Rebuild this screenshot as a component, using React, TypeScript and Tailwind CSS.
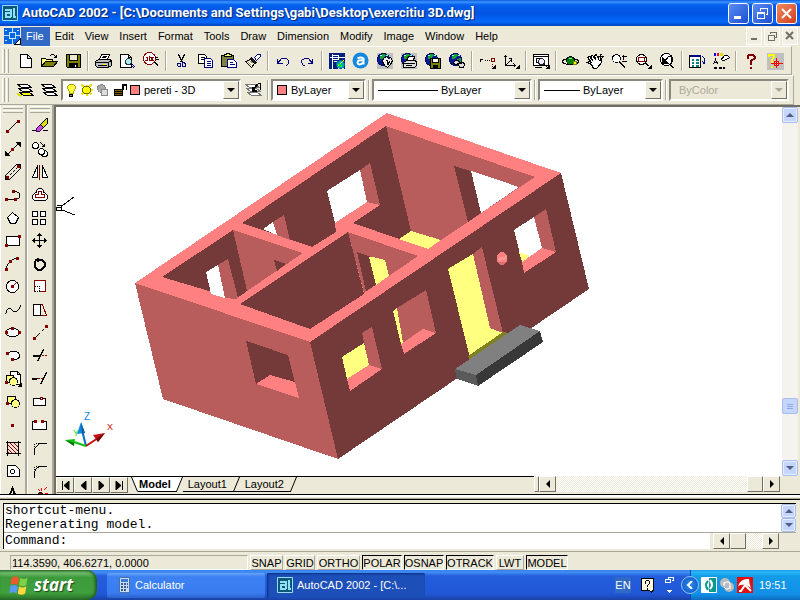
import React from "react"

type IconProps = { children: React.ReactNode; size?: number }

function Icon({ children, size = 18 }: IconProps): React.ReactElement {
  return (
    <svg
      width={size}
      height={size}
      viewBox={`0 0 ${size} ${size}`}
      fill="none"
      stroke="#000"
      shapeRendering="crispEdges"
      className="shrink-0"
      aria-hidden="true"
    >
      <g transform="translate(.5 .5)">{children}</g>
    </svg>
  )
}

const globe = (
  <>
    <circle cx="7" cy="7" r="6" fill="#0a1a9a" stroke="#001060" />
    <path d="M3 3l4-2 2 2-2 3-3 1zM8 7l4-2 1 3-3 3z" fill="#18a030" stroke="none" />
    <path d="M3 3h2M9 3h2" stroke="#8ff" />
  </>
)

type Tool = { name: string; icon: React.ReactNode }

const standardTools: Tool[][] = [
  [
    { name: "New", icon: <path d="M4 2h7l4 4v9H4zM11 2v4h4" fill="#fff" /> },
    {
      name: "Open",
      icon: (
        <>
          <path d="M1 14V6h4l1 1h6v3" fill="#ffff80" />
          <path d="M1 14l4-5h12l-4 5z" fill="#808000" />
          <path d="M9 4l2-2h2l3 3M16 2v3h-3" />
        </>
      ),
    },
    {
      name: "Save",
      icon: (
        <>
          <path d="M2 2h14v13H3l-1-1z" fill="#808000" />
          <path d="M5 2h8v6H5z" fill="#ece9d8" />
          <path d="M5 11h8v4H5z" fill="#000" />
          <path d="M11 12v2" stroke="#fff" />
        </>
      ),
    },
  ],
  [
    {
      name: "Print",
      icon: (
        <>
          <path d="M5 7l2-5h8l-2 5z" fill="#fff" />
          <path d="M1 9l3-2h12l1 2v4l-3 2H3l-2-2z" fill="#bbb" />
          <path d="M1 10h13l3-2M14 10v5M3 13h9M8 4h4M7 5h4" />
          <path d="M8 12h3" stroke="#ff0" />
        </>
      ),
    },
    {
      name: "Print Preview",
      icon: (
        <>
          <path d="M2 2h8l3 3v10H2zM10 2v3h3" fill="#fff" />
          <circle cx="10" cy="9" r="3" fill="#aee" stroke="#333" />
          <path d="M12 12l4 4M13 11l4 4" stroke="#000080" />
        </>
      ),
    },
    {
      name: "Find and Replace",
      icon: (
        <>
          <circle cx="7" cy="6" r="6" fill="#fff" stroke="#800000" />
          <path d="M3 5h2v3H3V7M7 3v5h2V5H7M11 5h-1v3h1" stroke="#800000" />
          <path d="M12 10l4 4M13 10l3 3M12 5h3M13 7h3" />
        </>
      ),
    },
  ],
  [
    {
      name: "Cut",
      icon: (
        <>
          <path d="M6 2l4 8M12 2L8 10" />
          <path d="M5 11h3v3H6l-1-1zM10 10h2l1 2v2h-3z" stroke="#000080" />
        </>
      ),
    },
    {
      name: "Copy",
      icon: (
        <>
          <path d="M2 2h6l2 2v7H2zM4 5h4M4 7h4" fill="#fff" />
          <path d="M8 6h6l2 2v7H8zM10 9h4M10 11h4M10 13h4" fill="#fff" stroke="#000080" />
        </>
      ),
    },
    {
      name: "Paste",
      icon: (
        <>
          <path d="M1 3h12v11H1z" fill="#808040" />
          <path d="M4 4V2h2V1h3v1h2v2z" fill="#ffff60" />
          <path d="M7 7h6l3 3v5H7zM9 10h3M9 12h5" fill="#fff" stroke="#000080" />
        </>
      ),
    },
    {
      name: "Match Properties",
      icon: (
        <>
          <path d="M10 5l3-3h3v2l-4 4z" fill="#fff" stroke="#000080" />
          <path d="M7 5l5 5-2 1-4-4z" fill="#222" />
          <path d="M6 7l4 4-3 4-6-6z" fill="#ffc" />
          <path d="M3 9l4 4M5 8l4 3" stroke="#888" />
        </>
      ),
    },
  ],
  [
    { name: "Undo", icon: <path d="M3 6v5h5M3 11l4-5h5l2 2v3l-2 2h-1" stroke="#000080" /> },
    { name: "Redo", icon: <path d="M14 6v5H9M14 11l-4-5H6L3 8v2l2 3h1" stroke="#000080" /> },
  ],
  [
    {
      name: "Today",
      icon: (
        <>
          <path d="M1 1h15v15H1z" fill="#002080" stroke="#002080" />
          <path d="M1 5h15M4 1v15M4 3h6v4H4" stroke="#fff" />
          <path d="M1 8h3M5 8h10v8H9V9H5z" fill="#ece9d8" stroke="none" />
          <circle cx="12" cy="12" r="4" fill="#0aa" stroke="#0060a0" />
          <path d="M9 14l6-6" stroke="#ff0" />
          <path d="M10 12l4 2" stroke="#0f0" />
        </>
      ),
    },
    {
      name: "Autodesk Point A",
      icon: (
        <g shapeRendering="auto">
          <circle cx="8" cy="8" r="8" fill="#1587dc" stroke="none" />
          <path d="M5 6q3-2 6 0v6M11 8q-6-1-6 2 1 4 6 0" stroke="#fff" strokeWidth="2" />
        </g>
      ),
    },
    {
      name: "Meet Now",
      icon: (
        <>
          <path d="M0 0h16v16H0z" fill="#c0c0c0" stroke="none" />
          {globe}
          <path d="M7 6l3-2 2 2 2-1 2 3-2 4-3 3-3-2-2-4z" fill="#eee" />
          <path d="M9 8h2v3M13 9l-2 4" />
        </>
      ),
    },
    {
      name: "Publish to Web",
      icon: (
        <>
          <path d="M0 0h16v16H0z" fill="#c0c0c0" stroke="none" />
          {globe}
          <path d="M6 8l2-4h6l-1 4z" fill="#fff" />
          <path d="M3 10l3-2h9l1 2v3l-2 2H3z" fill="#ddd" />
          <path d="M3 11h11M5 13h6" />
        </>
      ),
    },
    {
      name: "eTransmit",
      icon: (
        <>
          {globe}
          <path d="M6 6h10v10H6z" fill="#808000" />
          <path d="M8 6h6v4H8z" fill="#fff" />
          <path d="M9 13h4v3H9z" fill="#000" />
        </>
      ),
    },
    {
      name: "Insert Hyperlink",
      icon: (
        <>
          {globe}
          <path d="M5 10l2-2h3l1 2-1 2H6zM10 12l2-2h3l1 2-1 3h-4z" fill="#ddd" />
          <path d="M8 11h5" />
        </>
      ),
    },
  ],
  [
    {
      name: "Temporary Tracking Point",
      icon: (
        <>
          <path d="M1 7h3M2 6v3M6 8h1M8 8h1M10 8h1" />
          <path d="M13 6h3v3h-3zM14 11v1M14 13v1" stroke="#800000" />
          <path d="M17 13v3h-3z" fill="#000" />
        </>
      ),
    },
    {
      name: "UCS",
      icon: (
        <>
          <path d="M3 3v10h10M1 5l2-2 2 2M11 11l2 2-2 2M3 13l6-6M9 9V6H6" />
          <path d="M17 13v3h-3z" fill="#000" />
        </>
      ),
    },
  ],
  [
    {
      name: "Named Views",
      icon: (
        <>
          <path d="M1 2h15v11H1zM1 4h15" fill="#fff" />
          <path d="M4 6h5v4H4z" />
          <circle cx="9" cy="9" r="3" fill="#eef" stroke="#222" />
          <path d="M11 11l4 4M2 15h7" />
          <path d="M17 13v3h-3z" fill="#000" />
        </>
      ),
    },
  ],
  [
    {
      name: "3D Orbit",
      icon: (
        <>
          <ellipse cx="8" cy="9" rx="8" ry="3" />
          <circle cx="8" cy="8" r="4" fill="#008000" />
          <path d="M6 6h3" stroke="#8f8" />
          <path d="M11 9h3v3h-3z" fill="#ff0" stroke="#808000" />
        </>
      ),
    },
    {
      name: "Pan Realtime",
      icon: (
        <>
          <path d="M1 5l2-1 3 4-2-4 2-1 3 4-1-4 2-1 2 5 1 1 2-1v3l-4 5-1 1H7l-2-4-4-2 2-1 2 1z" fill="#fff" />
          <path d="M14 1v6M11 4h6M13 2h2M13 6h2M12 3v2M16 3v2" />
        </>
      ),
    },
    {
      name: "Zoom Realtime",
      icon: (
        <>
          <circle cx="6" cy="6" r="4" fill="#fff" />
          <path d="M9 9l6 6M9 10l6 6M11 4h5M13 2v5M11 9h5" />
        </>
      ),
    },
    {
      name: "Zoom Window",
      icon: (
        <>
          <circle cx="7" cy="7" r="5" fill="#fff" />
          <path d="M11 11l3 3M12 11l3 3" />
          <path d="M4 5h6v4H4z" stroke="#800000" />
          <path d="M17 13v3h-3z" fill="#000" />
        </>
      ),
    },
    {
      name: "Zoom Previous",
      icon: (
        <>
          <circle cx="8" cy="7" r="6" fill="#fff" />
          <path d="M12 12l4 4M11 12l4 4M6 9l4-5h3v7" />
          <path d="M4 5v6h6z" fill="#000" />
        </>
      ),
    },
  ],
  [
    {
      name: "Properties",
      icon: (
        <>
          <path d="M1 3h11v12H1z" fill="#fff" />
          <path d="M1 3h11" stroke="#000080" strokeWidth="2" />
          <path d="M3 7h2M7 7h3M3 10h2M7 10h3M3 13h2M7 13h3" stroke="#008080" strokeWidth="2" />
          <path d="M14 4l2 2v5M14 9l2 3" stroke="#000080" />
        </>
      ),
    },
    {
      name: "Layer Properties",
      icon: (
        <>
          <path d="M1 2h2" stroke="#00f" strokeWidth="3" />
          <path d="M4 2h2" stroke="#f00" strokeWidth="3" />
          <path d="M7 2h3" stroke="#dd0" strokeWidth="3" />
          <path d="M1 12l2-5 2 5M2 10h3" />
          <path d="M1 15h3M6 15h3M10 15h2" strokeWidth="2" />
          <path d="M8 8l4-5h3l2 2-5 3h-3" fill="#fff" />
        </>
      ),
    },
  ],
  [
    {
      name: "Help",
      icon: <path d="M5 6V4l2-2h3l2 2v2L8 9v3M8 14v2" stroke="#800000" strokeWidth="2" />,
    },
    {
      name: "Active Assistance",
      icon: (
        <>
          <path d="M0 0h17v17H0z" fill="#c0c0c0" stroke="none" />
          <path d="M2 4V2h5v3L5 8v3M5 13v2" stroke="#ff0" strokeWidth="2" />
          <path d="M8 9h4v4H8zM4 11h12M10 5v10" stroke="#f00" />
        </>
      ),
    },
  ],
]

const dot = (x: number, y: number) => <rect x={x - 1} y={y - 1} width="2" height="2" fill="#800000" stroke="#800000" />

const drawTools: Tool[] = [
  { name: "Line", icon: <><path d="M3 14L13 4" />{dot(3, 14)}{dot(14, 4)}</> },
  {
    name: "Construction Line",
    icon: (
      <>
        <path d="M2 15L15 2" />
        <path d="M1 15v-4l4 4zM16 2v4l-4-4z" fill="#000" />
        {dot(8, 9)}
      </>
    ),
  },
  {
    name: "Multiline",
    icon: (
      <>
        <path d="M1 12L12 1h4v4L5 16H1z" />
        <path d="M3 14L14 3" strokeDasharray="2 2" />
        {dot(3, 14)}
        {dot(14, 3)}
      </>
    ),
  },
  { name: "Polyline", icon: <><path d="M2 13h10l3-2V7l-3-2H9" />{dot(2, 13)}{dot(11, 13)}{dot(9, 5)}</> },
  { name: "Polygon", icon: <path d="M8 3l6 5-3 6H6L3 8z" fill="#fff" /> },
  { name: "Rectangle", icon: <><path d="M2 4h13v9H2z" fill="#fff" />{dot(2, 13)}{dot(15, 4)}</> },
  { name: "Arc", icon: <><path d="M2 15v-4l4-6 7-3" />{dot(2, 14)}{dot(6, 6)}{dot(13, 3)}</> },
  { name: "Circle", icon: <><circle cx="8" cy="8" r="6" fill="#fff" /><path d="M8 8l4-4" stroke="#800000" />{dot(8, 8)}</> },
  { name: "Spline", icon: <path d="M1 13c2-9 5-6 7-4s6 2 8-5" /> },
  {
    name: "Ellipse",
    icon: <><ellipse cx="8" cy="8" rx="7" ry="4" fill="#fff" />{dot(2, 8)}{dot(15, 8)}{dot(8, 4)}</>,
  },
  { name: "Ellipse Arc", icon: <><path d="M3 6c5-4 12-2 12 2s-5 5-8 4" fill="#fff" />{dot(3, 6)}{dot(8, 12)}</> },
  {
    name: "Insert Block",
    icon: (
      <>
        <path d="M6 1h7l3 3v10H6zM13 1v3h3" fill="#fff" />
        <path d="M2 5h7v7H2z" fill="#ffff80" />
        <circle cx="9" cy="11" r="4" fill="#ffff80" />
        {dot(2, 12)}
        <path d="M17 13v3h-3z" fill="#000" />
      </>
    ),
  },
  {
    name: "Make Block",
    icon: <><path d="M3 3h8v7H3z" fill="#ffff80" /><circle cx="11" cy="10" r="4" fill="#ffff80" />{dot(3, 10)}</>,
  },
  { name: "Point", icon: dot(8, 9) },
  {
    name: "Hatch",
    icon: (
      <>
        <path d="M3 3h11v11H3z" fill="#f5e0d8" />
        <path d="M3 5l9 9M3 9l5 5M5 3l9 9M9 3l5 5M3 13l2 1" stroke="#800000" />
        <path d="M1 3h15M1 14h15M3 1v15M14 1v15" />
      </>
    ),
  },
  { name: "Region", icon: <><path d="M3 3h8l4 4v7H3z" fill="#fff" /><circle cx="8" cy="9" r="2" /></> },
  { name: "Multiline Text", icon: <path d="M3 15L8 3l5 12M5 11h6" strokeWidth="2" /> },
]

const modifyTools: Tool[] = [
  {
    name: "Erase",
    icon: (
      <>
        <path d="M0 13h5M11 13h5" />
        <path d="M5 11l4-4 3 3-4 4H5z" fill="#c050d0" stroke="#400060" />
        <path d="M9 7l6-6h1v5l-4 4z" fill="#dd0" />
      </>
    ),
  },
  {
    name: "Copy Object",
    icon: (
      <>
        <circle cx="4" cy="5" r="3" fill="#fff" />
        <circle cx="13" cy="13" r="3" fill="#fff" />
        <circle cx="10" cy="11" r="3" fill="#fff" />
        <path d="M9 2l4 4M13 3v3h-3" />
      </>
    ),
  },
  {
    name: "Mirror",
    icon: <><path d="M6 2v12H1zM11 2v12h5z" fill="#fff" /><path d="M8 1v15" stroke="#800000" /></>,
  },
  {
    name: "Offset",
    icon: (
      <>
        <path d="M5 6V4l2-2h3l2 2v2h1l3 3v3l-2 2H3l-2-2V9l3-3z" fill="#fff" />
        <path d="M7 8V5h3v3h3v3H4V8z" stroke="#800000" />
      </>
    ),
  },
  { name: "Array", icon: <path d="M1 2h5v5H1zM10 2h4v5h-5V2zM1 10h5v5H1zM9 10h5v5H9z" fill="#fff" /> },
  {
    name: "Move",
    icon: (
      <>
        <path d="M8 1v14M1 8h14" />
        <path d="M6 3h4L8 1zM6 13h4l-2 2zM3 6v4L1 8zM13 6v4l2-2z" fill="#000" />
      </>
    ),
  },
  { name: "Rotate", icon: <path d="M5 4L3 7v4l3 3h4l3-3V7l-3-3M5 4h4M6 2v4" strokeWidth="2" /> },
  {
    name: "Scale",
    icon: (
      <>
        <path d="M3 2h11v11H3z" fill="#fff" stroke="#800000" />
        <path d="M3 8h5v5H3z" fill="#fff" strokeDasharray="1 1" />
      </>
    ),
  },
  {
    name: "Stretch",
    icon: (
      <>
        <path d="M2 3h7v11H2z" fill="#fff" />
        <path d="M9 3h2l4 11H9" stroke="#800000" />
        <path d="M9 3v11" strokeDasharray="1 1" />
      </>
    ),
  },
  { name: "Lengthen", icon: <><path d="M3 14l5-5" /><path d="M9 8l5-5" strokeDasharray="1 1" />{dot(3, 14)}{dot(15, 2)}</> },
  {
    name: "Trim",
    icon: <><path d="M1 8h7M6 14l6-12" /><path d="M1 9h6" /><path d="M10 8h6" stroke="#800000" strokeDasharray="2 1" /></>,
  },
  {
    name: "Extend",
    icon: <><path d="M0 8h6M9 14l6-12" /><path d="M0 9h5" /><path d="M6 8h5" stroke="#800000" strokeDasharray="2 1" /></>,
  },
  {
    name: "Break at Point",
    icon: <><path d="M2 5h12v7H2z" fill="#fff" /><path d="M9 4h2v2H9z" fill="#fff" stroke="#800000" /></>,
  },
  {
    name: "Break",
    icon: <><path d="M4 5H1v8h14V5h-3" fill="#fff" />{dot(4, 5)}{dot(11, 5)}</>,
  },
  { name: "Chamfer", icon: <><path d="M3 15V9l5-5h7" /><path d="M3 9V4h5" strokeDasharray="1 1" /></> },
  { name: "Fillet", icon: <><path d="M3 15v-5q1-5 6-6h6" /><path d="M3 9V4h5" strokeDasharray="1 1" /></> },
  {
    name: "Explode",
    icon: (
      <>
        <path d="M10 2v3M15 2l-3 3M16 8h-3M7 4l2 2" stroke="#f00" />
        <circle cx="9" cy="9" r="2" fill="#800000" />
        <path d="M3 16l5-5" strokeWidth="3" />
      </>
    ),
  },
]

const menus = ["File", "Edit", "View", "Insert", "Format", "Tools", "Draw", "Dimension", "Modify", "Image", "Window", "Help"]

const statusModes = [
  { label: "SNAP", on: false, width: "w-[33px]" },
  { label: "GRID", on: false, width: "w-[30px]" },
  { label: "ORTHO", on: false, width: "w-[43px]" },
  { label: "POLAR", on: true, width: "w-10" },
  { label: "OSNAP", on: true, width: "w-10" },
  { label: "OTRACK", on: true, width: "w-12" },
  { label: "LWT", on: false, width: "w-7" },
  { label: "MODEL", on: true, width: "w-[42px]" },
]

const raised = "border border-t-white border-l-white border-r-[#716f64] border-b-[#716f64] bg-[#ece9d8]"
const checker = "bg-[repeating-conic-gradient(#ece9d8_0_25%,#fff_0_50%)] bg-[length:2px_2px]"

function Arrow({ dir, color = "#000" }: { dir: "up" | "down" | "left" | "right"; color?: string }): React.ReactElement {
  const paths = {
    up: "M0 6h8L4 2z",
    down: "M0 2h8L4 6z",
    left: "M6 0v8L2 4z",
    right: "M2 0v8l4-4z",
  }
  return (
    <svg width="8" height="8" viewBox="0 0 8 8" aria-hidden="true">
      <path d={paths[dir]} fill={color} />
    </svg>
  )
}

function TitleBar(): React.ReactElement {
  const button = "flex h-[21px] w-[21px] items-center justify-center rounded-[3px] border border-white"
  return (
    <header className="flex h-[26px] shrink-0 items-center bg-[linear-gradient(#0a5be0,#3c93ff_8%,#0560ee_18%,#0054e3_50%,#0468fa_85%,#0040b8)] pr-[3px] pl-0.5">
      <svg width="16" height="16" viewBox="0 0 16 16" className="mr-1 shrink-0" aria-hidden="true">
        <path d="M.5.5h15v15H.5z" fill="#0b5878" stroke="#9adcf0" />
        <path d="M3 5h6v7M9 8H4v4h5M12 3v9h2" fill="none" stroke="#8fe0f4" strokeWidth="2" />
      </svg>
      <h1 className="flex-1 truncate font-['Roboto',sans-serif] text-[13px] font-bold text-white [text-shadow:1px_1px_1px_#0a246a]">
        AutoCAD 2002 - [C:\Documents and Settings\gabi\Desktop\exercitiu 3D.dwg]
      </h1>
      <div className="flex gap-[3px]">
        <button aria-label="Minimize" className={`${button} bg-linear-to-br from-[#5b8bf5] to-[#1c4fd0]`}>
          <svg width="15" height="15"><path d="M3 10h7v3H3z" fill="#fff" /></svg>
        </button>
        <button aria-label="Restore" className={`${button} bg-linear-to-br from-[#5b8bf5] to-[#1c4fd0]`}>
          <svg width="15" height="15" fill="none" stroke="#fff" shapeRendering="crispEdges">
            <path d="M5.5 4.500V2.500h7v6h-2M5 2.500h8M2.500 6.500h7v6h-7zM2 7.500h8" />
          </svg>
        </button>
        <button aria-label="Close" className={`${button} bg-linear-to-br from-[#f08860] to-[#d03c14]`}>
          <svg width="15" height="15" stroke="#fff" strokeWidth="2"><path d="M3 3l9 9M12 3l-9 9" /></svg>
        </button>
      </div>
    </header>
  )
}

function MenuBar(): React.ReactElement {
  const button = "flex h-[18px] w-4 items-center justify-center border border-white bg-[#f1efe4]"
  return (
    <nav className="flex h-5 shrink-0 items-center pl-1">
      <svg width="17" height="17" viewBox="0 0 17 17" shapeRendering="crispEdges" className="shrink-0" aria-hidden="true">
        <path d="M0 0h16v10l-5 6H0z" fill="#0866e0" />
        <path d="M8.500 0v5M8.500 11v5M0 7.500h5M12 7.500h4M5.500 4.500h6v6h-6zM1 2.500h2M1 12.500h2M13 2.500h2" fill="none" stroke="#bfe4ff" />
        <path d="M16 11v5h-5z" fill="#fff" stroke="#000" />
      </svg>
      <ul className="flex flex-1">
        {menus.map((name) => (
          <li key={name}>
            <button className={`block h-[19px] pr-1.5 pl-[5px] leading-[18px] ${name === "File" ? "bg-[#316ac5] text-white" : ""}`}>
              {name}
            </button>
          </li>
        ))}
      </ul>
      <div className="flex gap-0.5 pr-0.5">
        <button aria-label="Minimize drawing" className={button}>
          <svg width="10" height="10"><path d="M2 7h6v2H2z" fill="#716f64" /></svg>
        </button>
        <button aria-label="Restore drawing" className={button}>
          <svg width="10" height="10" fill="none" stroke="#716f64" shapeRendering="crispEdges">
            <path d="M3.500 3V1.500h6v5H8M3 1.500h7M1.500 4.500h6v5h-6zM1 4.500h7" />
          </svg>
        </button>
        <button aria-label="Close drawing" className={button}>
          <svg width="10" height="10" stroke="#716f64" strokeWidth="2"><path d="M1 1l7 7M8 1L1 8" /></svg>
        </button>
      </div>
    </nav>
  )
}

function Grip(): React.ReactElement {
  return (
    <div className="flex h-6 shrink-0 gap-px pl-0.5">
      <div className="w-[3px] border-r border-l border-r-[#aca899] border-l-white" />
      <div className="w-[3px] border-r border-l border-r-[#aca899] border-l-white" />
    </div>
  )
}

function Separator(): React.ReactElement {
  return (
    <div className="flex w-1.5 shrink-0 justify-center">
      <div className="h-5 w-0.5 border-r border-l border-r-white border-l-[#aca899]" />
    </div>
  )
}

function StandardToolbar(): React.ReactElement {
  return (
    <div className="mr-2 flex h-[29px] shrink-0 items-center border-t border-r border-b border-t-white border-r-[#aca899] border-b-[#aca899]">
      <Grip />
      <div className="flex items-center pl-1">
        {standardTools.map((group, i) => (
          <React.Fragment key={i}>
            {i > 0 && <Separator />}
            {group.map((tool) => (
              <button key={tool.name} aria-label={tool.name} className="flex h-6 w-6 items-center justify-center">
                <Icon>{tool.icon}</Icon>
              </button>
            ))}
          </React.Fragment>
        ))}
      </div>
    </div>
  )
}

type ComboProps = {
  label: string
  value: string
  width: string
  pad: string
  disabled?: boolean
  children?: React.ReactNode
}

function Combo({ label, value, width, pad, disabled, children }: ComboProps): React.ReactElement {
  return (
    <div
      className={`relative h-[22px] shrink-0 border-2 border-t-[#8a887c] border-r-white border-b-white border-l-[#8a887c] ${width} ${disabled ? "bg-[#ece9d8]" : "bg-white"}`}
    >
      <select
        aria-label={label}
        disabled={disabled}
        className={`block h-full w-full appearance-none bg-transparent ${pad} ${disabled ? "text-[#aca899] opacity-100" : "text-black"}`}
      >
        <option>{value}</option>
      </select>
      <div className="pointer-events-none absolute inset-y-0 left-0 flex items-center">{children}</div>
      <span className={`pointer-events-none absolute inset-y-0 right-0 flex w-4 items-center justify-center ${raised}`}>
        <Arrow dir="down" color={disabled ? "#aca899" : "#000"} />
      </span>
    </div>
  )
}

const sheets = <path d="M1 3h10l4 3H5zM2 7h10l4 3H6zM3 11h10l4 3H7z" fill="#fff" />

function PropertiesToolbar(): React.ReactElement {
  const tool = "flex h-6 w-6 shrink-0 items-center justify-center"
  return (
    <div className="mr-1.5 flex h-[30px] shrink-0 items-center border-t border-r border-b border-t-white border-r-[#aca899] border-b-[#aca899]">
      <Grip />
      <div className="flex items-center pl-1">
        <button aria-label="Make Object's Layer Current" className={tool}>
          <Icon>
            {sheets}
            <path d="M3 11h10l4 3H7z" fill="#ff0" />
            <path d="M1 12l4 3" stroke="#dd0" strokeWidth="2" />
          </Icon>
        </button>
        <button aria-label="Layers" className={tool}>
          <Icon>{sheets}</Icon>
        </button>
        <Combo label="Layer" value="pereti - 3D" width="w-[180px]" pad="pl-[81px]">
          <svg width="78" height="18" viewBox="0 0 78 18" fill="none" stroke="#000" shapeRendering="crispEdges">
            <g transform="translate(.5 .5)">
              <path d="M6 12V10L4 7V5l2-2h4l2 2v2l-2 3v2z" fill="#ffff40" stroke="#b0a000" />
              <path d="M6 13h3v2H6z" fill="#888" />
              <path d="M18 3l10 10M28 3L18 13M23 3v11M18 8h11" stroke="#e8e000" strokeWidth="2" />
              <path d="M21 5h4l2 2v3l-2 2h-4l-2-2V7z" fill="#ff0" stroke="#806000" />
              <circle cx="38" cy="7" r="4" fill="#aaa" stroke="#888" />
              <path d="M38 8h6v6h-6z" fill="#ddd" stroke="#888" />
              <path d="M51 8h8v6h-8z" fill="#806000" />
              <path d="M51 10h8M51 12h8M59 8V3h4v5" />
              <path d="M60 8V4h2" />
              <path d="M67 4h9v9h-9z" fill="#ff8080" />
            </g>
          </svg>
        </Combo>
        <button aria-label="Layer Previous" className={tool}>
          <Icon>
            <g stroke="#777">{sheets}</g>
            <path d="M8 9l5-6M8 5v4h4" strokeWidth="2" />
            <path d="M13 2h3v6" />
          </Icon>
        </button>
        <Separator />
        <Combo label="Color" value="ByLayer" width="w-[95px]" pad="pl-[18px]">
          <span className="ml-1 h-2.5 w-2.5 border border-black bg-[#ff8080]" />
        </Combo>
        <Separator />
        <Combo label="Linetype" value="ByLayer" width="w-40" pad="pl-[67px]">
          <span className="ml-1 h-px w-[60px] bg-black" />
        </Combo>
        <Separator />
        <Combo label="Lineweight" value="ByLayer" width="w-[125px]" pad="pl-[43px]">
          <span className="ml-1 h-px w-9 bg-black" />
        </Combo>
        <Separator />
        <Combo label="Plot Style" value="ByColor" width="w-[120px]" pad="pl-2" disabled />
      </div>
    </div>
  )
}

function ToolColumn({ tools, label }: { tools: Tool[]; label: string }): React.ReactElement {
  return (
    <div aria-label={label} role="toolbar" className="w-[27px] shrink-0 border-r-2 border-r-[#aca899] border-l border-l-white">
      <div className="flex h-[9px] flex-col gap-px px-0.5 pt-px">
        <div className="h-[3px] border-t border-b border-t-white border-b-[#aca899]" />
        <div className="h-[3px] border-t border-b border-t-white border-b-[#aca899]" />
      </div>
      {tools.map((tool) => (
        <button key={tool.name} aria-label={tool.name} className="flex h-[23px] w-6 items-center justify-center">
          <Icon>{tool.icon}</Icon>
        </button>
      ))}
    </div>
  )
}

const TOP = "#ff8080"
const MID = "#b85c5c"
const DARK = "#743a3a"
const FLOOR = "#ffff80"

// painted back to front
const faces: [string, string][] = [
  [TOP, "135,283 387,113 561,173 310,342"],
  // left room
  [DARK, "162,277 233,230 247,291 236,299"],
  [MID, "233,230 303,253 247,291"],
  [DARK, "274,260 286,264 277,271"],
  ["#fff", "206,272 218,265 225,298 211,294"],
  [MID, "218,265 228,259 238,298 236,299 225,298"],
  // back room
  [DARK, "242,223 386,126 411,231 399,239 353,223 336,232 312,247"],
  [MID, "386,126 535,177 441,240 411,231"],
  [FLOOR, "411,231 441,240 428,249 399,239"],
  ["#fff", "263,229 273,222 277,235"],
  [MID, "273,222 284,215 290,240 277,235"],
  ["#fff", "327,191 360,170 367,202 335,223"],
  [MID, "360,170 370,163 380,205 367,202"],
  [TOP, "335,223 367,202 380,205 353,223 336,232"],
  [DARK, "454,166 471,171 481,213 468,222"],
  ["#fff", "471,171 519,187 481,213"],
  // middle room
  [DARK, "240,304 348,232 364,294 310,329"],
  [MID, "348,232 418,256 364,293"],
  [DARK, "357,252 371,257 376,285 366,291"],
  [FLOOR, "369,257 373,257 385,260 389,276 376,285"],
  // outer walls
  [MID, "135,283 310,342 338,459 163,399"],
  [DARK, "310,342 561,173 589,289 338,459"],
  // left wall window
  [DARK, "246,341 288,355 295,383 270,375 256,384"],
  [TOP, "270,375 295,382 299,398 256,384"],
  // front windows
  [FLOOR, "342,357 364,343 369,365 347,379"],
  [MID, "362,333 372,327 382,369 369,365"],
  [TOP, "369,365 382,369 350,391 347,379"],
  [FLOOR, "393,311 397,308 404,342 401,344"],
  [MID, "397,308 426,290 436,333 423,329 403,343"],
  [TOP, "401,344 423,329 436,333 404,354"],
  ["#fff", "514,230 534,217 542,248 522,262"],
  [FLOOR, "519,252 530,256 522,262"],
  [MID, "534,217 546,209 556,252 542,248"],
  [TOP, "542,248 556,252 524,273 522,262"],
  // door
  [FLOOR, "448,269 473,254 490,328 507,333 470,358"],
  [MID, "473,254 482,247 503,333 490,328"],
  ["#808020", "468,356 503,332 508,333 470,360"],
  // step
  ["#808080", "455,369 520,325 540,331 476,375"],
  ["#383838", "476,375 540,331 543,342 478,386"],
  ["#5a5a5a", "455,369 476,375 478,386 457,379"],
]

function Drawing(): React.ReactElement {
  return (
    <svg
      width="725"
      height="370"
      viewBox="56 107 725 370"
      className="block shrink-0"
      shapeRendering="crispEdges"
      role="img"
      aria-label="3D model of the walls"
    >
      {faces.map(([fill, points], i) => (
        <polygon key={i} fill={fill} points={points} />
      ))}
      <ellipse cx="502" cy="258.500" rx="5.500" ry="6.500" fill={TOP} />
      <path d="M498 258l9-2v3l-8 2z" fill="#ff9a96" />
      <path d="M498 262l8 0-3 3h-3z" fill="#e07070" />
      <path d="M56.500 205.500h5v2h-5v3h5v-3M62 206l12-9M62 210l13 5" fill="none" stroke="#000" />
      <g shapeRendering="auto">
        <path d="M86 446L82 430" stroke="#0a70c8" strokeWidth="2" />
        <path d="M81 422l-4 12 8-1z" fill="#1088e0" />
        <path d="M81 422l1 12 3-1z" fill="#0860a8" />
        <path d="M86 446l12-8" stroke="#c01010" strokeWidth="2" />
        <path d="M105 433l-12 2 5 7z" fill="#c01010" />
        <path d="M105 433l-9 6 2 3z" fill="#700808" />
        <path d="M86 446l-12-4" stroke="#10c010" strokeWidth="2" />
        <path d="M65 440l10-1-1 7z" fill="#10c010" />
        <path d="M65 440l9 3v3z" fill="#087008" />
      </g>
      <g fontFamily="Liberation Sans, sans-serif">
        <text x="84" y="420" fontSize="10" fill="#1088e0">Z</text>
        <text x="107" y="430" fontSize="9" fill="#e01010">X</text>
        <text x="73" y="436" fontSize="9" fill="#10e010">Y</text>
      </g>
    </svg>
  )
}

function XpScrollButton({ dir }: { dir: "up" | "down" }): React.ReactElement {
  return (
    <button
      aria-label={`Scroll ${dir}`}
      className="flex h-4 w-full shrink-0 items-center justify-center rounded-[2px] border border-[#a8bdf0] bg-[#c6d6fb] shadow-[inset_0_0_0_1px_#e6eefe]"
    >
      <Arrow dir={dir} color="#4d6185" />
    </button>
  )
}

function ClassicButton({ dir, label }: { dir: "left" | "right"; label: string }): React.ReactElement {
  return (
    <button aria-label={label} className={`flex h-4 w-[17px] shrink-0 items-center justify-center ${raised}`}>
      <Arrow dir={dir} />
    </button>
  )
}

function TabEdge({ d, fill }: { d: string; fill: string }): React.ReactElement {
  return (
    <svg width="8" height="15" viewBox="0 0 8 15" className="shrink-0" aria-hidden="true">
      <path d={fill} fill="#fff" />
      <path d={d} fill="none" stroke="#000" />
    </svg>
  )
}

function LayoutTabs(): React.ReactElement {
  const nav = ["M3.500 0v9M10 0v9L5 4.500z", "M9 0v9L4 4.500z", "M4 0v9l5-4.500z", "M9.500 0v9M3 0v9l5-4.500z"]
  const names = ["First tab", "Previous tab", "Next tab", "Last tab"]
  return (
    <div className="flex h-[18px] shrink-0">
      <div className="flex flex-1 border-t border-t-black">
        {nav.map((d, i) => (
          <button key={names[i]} aria-label={names[i]} className={`flex h-4 w-[18px] items-center justify-center ${raised}`}>
            <svg width="13" height="9" viewBox="0 0 13 9"><path d={d} stroke="#000" strokeWidth="1" /></svg>
          </button>
        ))}
        <div className="ml-0.5 flex h-[15px] items-start">
          <TabEdge d="M1.500 0l6 14.500" fill="M1 0h7v15z" />
          <button className="h-[15px] border-b border-b-black bg-white pr-1 pl-px text-[11px] leading-[15px] font-bold">Model</button>
          <TabEdge d="M7.500 0l-6 14.500M0 14.500h2" fill="M0 0h8L2 15H0z" />
          <button className="h-[15px] w-[49px] border-b border-b-black leading-[15px]">Layout1</button>
          <TabEdge d="M7.500 0l-6 14.500M0 14.500h8" fill="" />
          <button className="h-[15px] w-[49px] border-b border-b-black leading-[15px]">Layout2</button>
          <TabEdge d="M7.500 0l-6 14.500M0 14.500h2" fill="" />
        </div>
      </div>
      <div className={`h-4 w-[5px] ${raised}`} />
      <ClassicButton dir="left" label="Scroll left" />
      <div className={`flex h-4 w-[207px] justify-end ${checker}`}>
        <div className={`h-4 w-4 ${raised}`} />
      </div>
      <ClassicButton dir="right" label="Scroll right" />
      <div className="w-5" />
    </div>
  )
}

function Workspace(): React.ReactElement {
  return (
    <main className="flex min-h-0 flex-1 overflow-hidden">
      <ToolColumn tools={drawTools} label="Draw" />
      <ToolColumn tools={modifyTools} label="Modify" />
      <div className="flex min-w-0 flex-1 flex-col border-t-2 border-l-2 border-[#716f64]">
        <div className="flex min-h-0 flex-1">
          <div className="min-w-0 flex-1 overflow-hidden bg-white">
            <Drawing />
          </div>
          <div className="mr-0.5 flex w-4 flex-col bg-[#f4f3ee]">
            <XpScrollButton dir="up" />
            <div className="flex-1" />
            <div className="flex h-4 flex-col items-center justify-center gap-px rounded-[2px] border border-[#a8bdf0] bg-[#c6d6fb]">
              <span className="h-px w-1.5 bg-[#8caae6]" />
              <span className="h-px w-1.5 bg-[#8caae6]" />
              <span className="h-px w-1.5 bg-[#8caae6]" />
            </div>
            <div className="h-[46px]" />
            <XpScrollButton dir="down" />
          </div>
        </div>
        <LayoutTabs />
      </div>
    </main>
  )
}

function CommandWindow(): React.ReactElement {
  return (
    <section className="shrink-0">
      <div className="h-[6px] border-t border-b border-black bg-[#ece9d8] shadow-[inset_0_2px_#fff,inset_0_-1px_#aca899]" />
      <div className="mt-[3px] mr-1 ml-[3px] border-t border-l border-black bg-white font-['Liberation_Mono',monospace] text-[13px] leading-[14px]">
        <div className="flex">
          <div className="flex-1 pl-px">
            <p>shortcut-menu.</p>
            <p>Regenerating model.</p>
          </div>
          <div className="flex w-[15px] flex-col [&>button]:h-[14px]">
            <XpScrollButton dir="up" />
            <XpScrollButton dir="down" />
          </div>
        </div>
        <div className="flex h-[17px] border-t border-t-[#aca899]">
          <label htmlFor="command" className="pl-px leading-4">Command:</label>
          <input id="command" className="min-w-0 flex-1 pl-1 outline-none" />
          <div className="flex w-[86px] bg-[#ece9d8] pl-[3px]">
            <ClassicButton dir="left" label="Scroll command line left" />
            <div className={`h-4 w-4 ${raised}`} />
            <div className={`h-4 w-4 ${checker}`} />
            <ClassicButton dir="right" label="Scroll command line right" />
          </div>
        </div>
      </div>
    </section>
  )
}

function StatusBar(): React.ReactElement {
  return (
    <div className="mt-0.5 flex h-[19px] shrink-0 items-end gap-[2px] border-t border-t-[#aca899] pl-2.5">
      <div className="h-[15px] w-[238px] border border-t-[#aca899] border-r-white border-b-white border-l-[#aca899] pl-px leading-[14px]">
        114.3590, 406.6271, 0.0000
      </div>
      {statusModes.map((mode) => (
        <button
          key={mode.label}
          aria-pressed={mode.on}
          className={`flex h-[15px] items-center justify-center border ${mode.width} ${
            mode.on ? "border-t-black border-r-white border-b-white border-l-black" : "border-t-white border-r-[#aca899] border-b-[#aca899] border-l-white"
          }`}
        >
          {mode.label}
        </button>
      ))}
    </div>
  )
}

function Taskbar(): React.ReactElement {
  const task = "flex h-[25px] w-[158px] items-center gap-1 rounded-[2px] text-left text-white"
  return (
    <footer className="flex h-[30px] shrink-0 items-center bg-[linear-gradient(#3a80ee,#3f8cf3_8%,#245edb_20%,#2157d7_80%,#1941a5)] text-white">
      <button className="flex h-full w-[97px] items-center gap-1 rounded-r-[10px] bg-[linear-gradient(#3c7f3c,#6dbb6a_10%,#3d9a3b_25%,#3fa03d_75%,#2a6f29)] pl-2 shadow-[inset_-2px_0_3px_#1f5a1f]">
        <svg width="22" height="22" viewBox="1 1 18 18" aria-hidden="true">
          <path d="M4 4q3-2 6 0L9 10q-3-2-6 0z" fill="#f05a28" />
          <path d="M11 4q3 2 6 0l-1 6q-3 2-6 0z" fill="#7ed048" />
          <path d="M3 11q3-2 6 0l-1 6q-3-2-6 0z" fill="#5a9af8" />
          <path d="M10 11q3 2 6 0l-1 6q-3 2-6 0z" fill="#ffd83c" />
        </svg>
        <span className="font-['Open_Sans',sans-serif] text-[17px] leading-5 font-bold italic [text-shadow:1px_1px_1px_#1b4a1b]">start</span>
      </button>
      <div className="ml-2.5 flex flex-1 gap-0.5">
        <button className={`${task} bg-[linear-gradient(#6ba4f8,#3c81f3_15%,#3a7cf0_80%,#2c62cc)] pl-2.5`}>
          <svg width="14" height="16" viewBox="0 0 14 16" aria-hidden="true">
            <path d="M2.500.5h10v15h-10z" fill="#c8dcf4" stroke="#4a6fa8" />
            <path d="M4 2h7v3H4z" fill="#3a78d8" />
            <path d="M4 7h2M7 7h2M10 7h1M4 10h2M7 10h2M10 10h1M4 13h2M7 13h2" stroke="#385a90" strokeWidth="2" />
          </svg>
          Calculator
        </button>
        <button className={`${task} bg-[#1d4fb8] pl-2.5 shadow-[inset_1px_1px_2px_#0c2f80]`}>
          <svg width="16" height="16" viewBox="0 0 16 16" aria-hidden="true">
            <path d="M.5.5h15v15H.5z" fill="#0b5878" stroke="#9adcf0" />
            <path d="M3 5h6v7M9 8H4v4h5M12 3v9h2" fill="none" stroke="#8fe0f4" strokeWidth="2" />
          </svg>
          <span className="truncate">AutoCAD 2002 - [C:\...</span>
        </button>
      </div>
      <button className="mr-2.5 h-4 w-4 bg-[#316ac5]">EN</button>
      <button aria-label="Language help" className="mr-2.5">
        <svg width="14" height="15" viewBox="0 0 14 15" fill="none" shapeRendering="crispEdges">
          <path d="M.5.5h12v12h-1l-1 2-2-2h-8z" fill="#fffde0" stroke="#000" />
          <path d="M4.500 5.500v-2l1-1h2l1 1v2l-2 2v1M6.500 9.500v2" stroke="#000" />
        </svg>
      </button>
      <button aria-label="Language bar options" className="mr-4">
        <svg width="9" height="18" viewBox="0 0 9 18" fill="none" stroke="#fff" shapeRendering="crispEdges">
          <path d="M3.500 3V1.500h5v3H7M.5 3.500h5v3h-5z" />
          <path d="M2 14h5l-2.500 3z" fill="#fff" stroke="none" />
        </svg>
      </button>
      <div className="flex h-full w-[110px] items-center gap-0.5 border-l border-l-[#0c4ab0] bg-[linear-gradient(#1a9cf0,#29b6f8_8%,#139be8_20%,#1290e8_80%,#0d6cc0)]">
        <button aria-label="Show hidden icons" className="-ml-2.5 flex h-[18px] w-[18px] items-center justify-center rounded-full border border-[#8cc4f8] bg-[radial-gradient(#2a8cf0,#1050c0)]">
          <svg width="8" height="8" fill="none" stroke="#fff" strokeWidth="2"><path d="M6 0L2 4l4 4" /></svg>
        </button>
        <svg width="16" height="16" viewBox="0 0 16 16" fill="none" aria-hidden="true">
          <path d="M.5.5h15v15H.5z" fill="#fff" stroke="#fff" />
          <path d="M8 1h7v14H8z" fill="#109890" />
          <path d="M7 4q-4 4 0 8M5 10l2 3" stroke="#109890" strokeWidth="2" />
          <path d="M9 4q4 4 0 8M11 6L9 3" stroke="#fff" strokeWidth="2" />
        </svg>
        <svg width="16" height="16" viewBox="0 0 16 16" fill="none" aria-hidden="true">
          <circle cx="6" cy="6" r="5" fill="#b8bcc0" />
          <circle cx="10" cy="10" r="5" fill="#b8bcc0" />
          <path d="M5 9V7l2-2h3l1 2M5 5v3M11 7v3l-2 2H7L5 10M11 12V9" stroke="#fff" />
        </svg>
        <svg width="16" height="16" viewBox="0 0 16 16" fill="none" aria-hidden="true">
          <path d="M0 0h16v16H0z" fill="#e01010" />
          <path d="M1 9Q4 1 12 2q0 5 2 9-3-2-5-3-4-1-8 1z" fill="#fff" />
          <path d="M8 8l-4 6H2M8 8l6 6" stroke="#fff" strokeWidth="2" />
        </svg>
        <time className="ml-1">19:51</time>
      </div>
    </footer>
  )
}

export default function App(): React.ReactElement {
  return (
    <div className="flex h-screen flex-col overflow-hidden bg-[#ece9d8] font-['Liberation_Sans',sans-serif] text-[11px] leading-4 text-black">
      <TitleBar />
      <MenuBar />
      <StandardToolbar />
      <PropertiesToolbar />
      <Workspace />
      <CommandWindow />
      <StatusBar />
      <Taskbar />
    </div>
  )
}
